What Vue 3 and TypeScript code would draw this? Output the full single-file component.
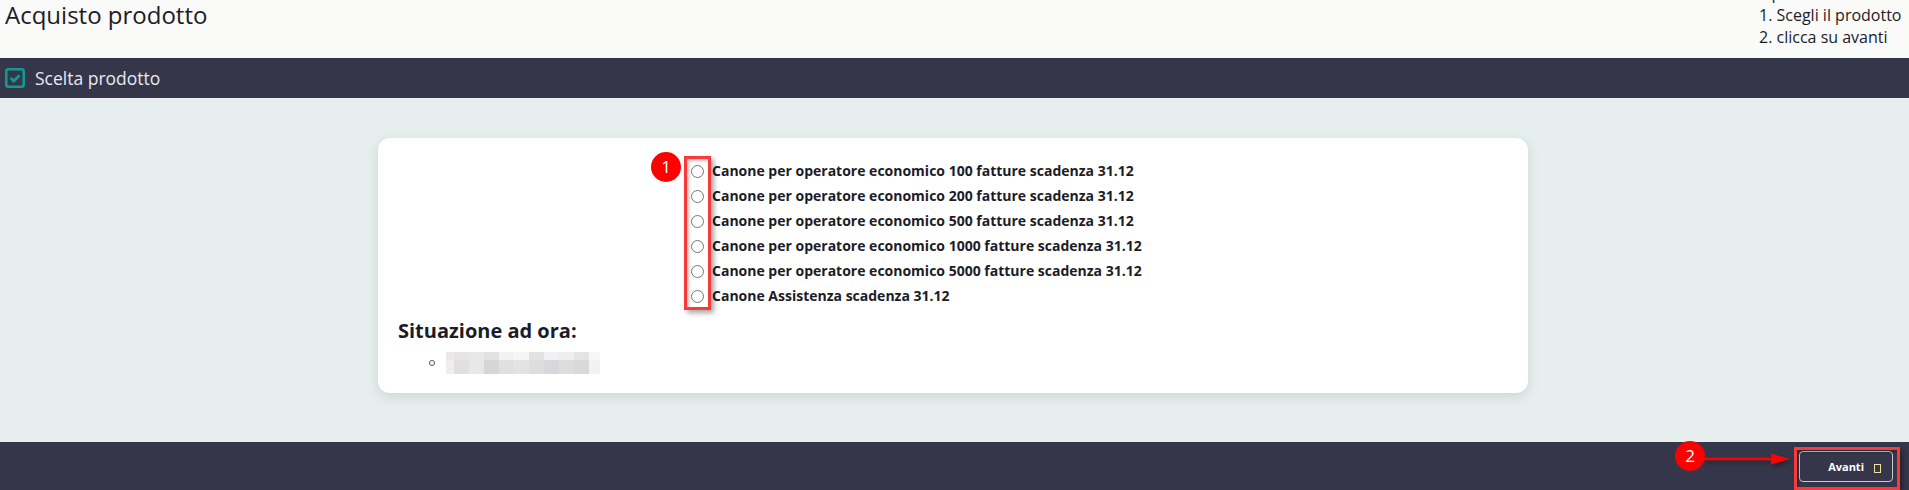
<script setup lang="ts">
const products = [
  'Canone per operatore economico 100 fatture scadenza 31.12',
  'Canone per operatore economico 200 fatture scadenza 31.12',
  'Canone per operatore economico 500 fatture scadenza 31.12',
  'Canone per operatore economico 1000 fatture scadenza 31.12',
  'Canone per operatore economico 5000 fatture scadenza 31.12',
  'Canone Assistenza scadenza 31.12',
];

const blurColumns = [8, 15, 15, 15, 15, 15, 15, 15, 15, 15, 11];
const blurRows = [
  ['#e8e8e8', '#e6e4e4', '#e8e8e8', '#e2e2e2', '#f2f2f2', '#f5f5f5', '#e2e2e2', '#f0f0f0', '#eeeeee', '#e4e4e4', '#f5f6f6'],
  ['#eeeeee', '#e0e0e0', '#e8e8e6', '#d6d6d6', '#e0e0e0', '#e4e2e2', '#dcdddd', '#d8d8dc', '#dddddd', '#d9d9d9', '#f1f2f2'],
];
</script>

<template>
  <div class="page">
    <header class="top">
      <h1 class="title">Acquisto prodotto</h1>
      <div class="steps">
        <div>Operazioni</div>
        <div>1. Scegli il prodotto</div>
        <div>2. clicca su avanti</div>
      </div>
    </header>

    <div class="bar">
      <svg class="check" width="20" height="20" viewBox="0 0 20 20">
        <rect x="1.3" y="1.3" width="17.4" height="17.4" rx="2" fill="none" stroke="#0f9a93" stroke-width="2.6" />
        <path d="M5.5 10 L8.8 13 L14.5 7.5" fill="none" stroke="#0f9a93" stroke-width="2.8" />
      </svg>
      <span>Scelta prodotto</span>
    </div>

    <main class="content">
      <section class="card">
        <div class="options">
          <label v-for="product in products" :key="product" class="option">
            <span class="radio"></span>
            <span>{{ product }}</span>
          </label>
        </div>
        <h2 class="status">Situazione ad ora:</h2>
        <div class="status-row">
          <span class="bullet"></span>
          <div class="blur">
            <div v-for="(row, r) in blurRows" :key="r" class="blur-row" :class="`blur-row-${r}`">
              <span
                v-for="(color, c) in row"
                :key="c"
                :style="{ width: blurColumns[c] + 'px', background: color }"
              ></span>
            </div>
          </div>
        </div>
      </section>
    </main>

    <footer class="bottom">
      <button class="next" type="button">
        <span>Avanti</span>
        <span class="missing-glyph"></span>
      </button>
    </footer>

    <!-- annotations pasted over the screenshot -->
    <div class="mark mark-1">1</div>
    <div class="box box-radios"></div>
    <svg class="arrow" width="90" height="20" viewBox="0 0 90 20">
      <path d="M0 10 H70" stroke="#fe0000" stroke-width="2.6" />
      <path d="M68 4.5 L87 10 L68 15.5 Z" fill="#fe0000" />
    </svg>
    <div class="mark mark-2">2</div>
    <div class="box box-next"></div>
  </div>
</template>

<style>
html,
body {
  margin: 0;
  padding: 0;
}
</style>

<style scoped>
.page {
  position: relative;
  width: 1909px;
  height: 490px;
  display: flex;
  flex-direction: column;
  overflow: hidden;
  font-family: 'Open Sans', sans-serif;
  color: #1c1c28;
}

.top {
  height: 58px;
  flex: none;
  display: flex;
  justify-content: space-between;
  align-items: flex-end;
  padding-left: 5px;
  background: #fafaf8;
  overflow: hidden;
}

.title {
  align-self: flex-start;
  margin: 0;
  font-size: 24px;
  font-weight: 400;
  line-height: 30px;
}

.steps {
  width: 150px;
  padding-bottom: 10px;
  font-size: 16px;
  line-height: 22px;
}

.bar {
  height: 40px;
  flex: none;
  display: flex;
  align-items: center;
  gap: 10px;
  padding-left: 5px;
  background: #35364a;
  color: #e9e9ee;
  font-size: 17.5px;
}

.check {
  flex: none;
}

.content {
  flex: 1;
  padding-top: 40px;
  background: #e6efee;
}

.card {
  box-sizing: border-box;
  width: 1150px;
  height: 255px;
  margin-left: 378px;
  padding: 20px 20px 0;
  border-radius: 12px;
  background: #fff;
  box-shadow: 0 4px 12px rgba(70, 90, 90, 0.16);
}

.options {
  display: flex;
  flex-direction: column;
  padding-left: 293px;
}

.option {
  display: flex;
  align-items: center;
  gap: 8px;
  height: 25px;
  font-size: 14px;
  font-weight: 700;
}

.radio {
  box-sizing: border-box;
  width: 13px;
  height: 13px;
  margin-top: 1px;
  border: 1px solid #767676;
  border-radius: 50%;
  background: #fff;
}

.status {
  margin: 9px 0 0;
  font-size: 20px;
  font-weight: 700;
  line-height: 27px;
}

.status-row {
  display: flex;
  align-items: center;
  gap: 11px;
  margin-top: 8px;
  padding-left: 31px;
}

.bullet {
  box-sizing: border-box;
  width: 6px;
  height: 6px;
  border: 1px solid #555;
  border-radius: 50%;
}

.blur {
  display: flex;
  flex-direction: column;
}

.blur-row {
  display: flex;
}

.blur-row-0 {
  height: 8px;
}

.blur-row-1 {
  height: 14px;
}

.bottom {
  box-sizing: border-box;
  height: 48px;
  flex: none;
  display: flex;
  justify-content: flex-end;
  align-items: flex-start;
  padding: 9px 16px 0 0;
  background: #35364a;
}

.next {
  box-sizing: border-box;
  width: 94px;
  height: 31px;
  display: flex;
  align-items: center;
  justify-content: flex-end;
  gap: 10px;
  padding: 0 11px 0 0;
  border: 1px solid #c9c9d2;
  border-radius: 4px;
  background: #35364a;
  color: #fff;
  font-family: inherit;
  font-size: 11px;
  font-weight: 700;
}

.missing-glyph {
  box-sizing: border-box;
  width: 7px;
  height: 9px;
  margin-top: 4px;
  border: 1px solid #f0e2a0;
}

.mark {
  position: absolute;
  width: 30px;
  height: 30px;
  border-radius: 50%;
  background: #fe0000;
  color: #fff;
  font-size: 17px;
  line-height: 30px;
  text-align: center;
}

.mark-1 {
  left: 651px;
  top: 152px;
}

.mark-2 {
  left: 1675px;
  top: 441px;
}

.box {
  position: absolute;
  box-sizing: border-box;
  border: 3px solid #f73a3a;
  box-shadow: 3px 3px 5px rgba(0, 0, 0, 0.35), inset 2px 2px 3px rgba(0, 0, 0, 0.25);
}

.box-radios {
  left: 684px;
  top: 156px;
  width: 27px;
  height: 154px;
}

.box-next {
  left: 1794px;
  top: 447px;
  width: 106px;
  height: 43px;
}

.arrow {
  position: absolute;
  left: 1703px;
  top: 449px;
  filter: drop-shadow(2px 3px 2px rgba(0, 0, 0, 0.35));
}
</style>
